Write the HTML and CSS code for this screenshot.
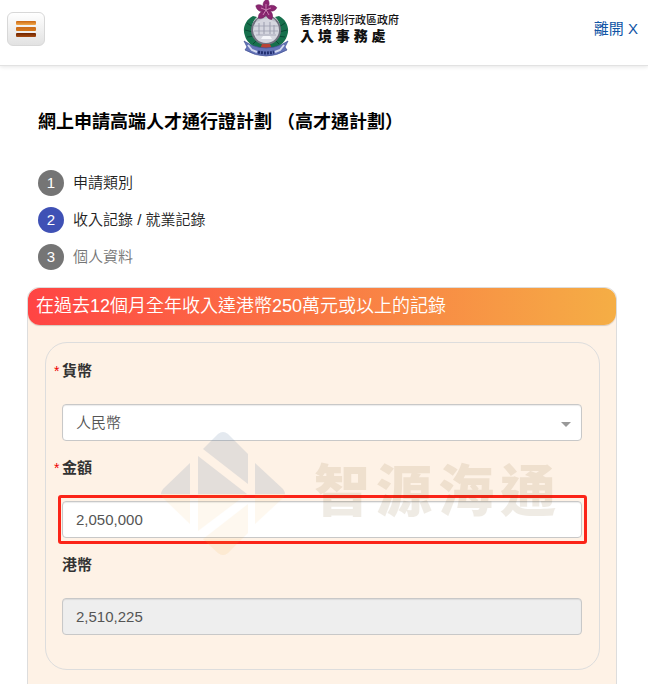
FILE: index.html
```
<!DOCTYPE html>
<html lang="zh-Hant">

<head>
    <meta charset="UTF-8">
    <meta name="viewport" content="width=device-width, initial-scale=1.0">
    <title>網上申請高端人才通行證計劃</title>
    <link rel="stylesheet" href="styles.css">
</head>

<body>
    <header class="header">
        <button type="button" class="menu-btn" aria-label="選單">
            <span class="bar bar-light"></span>
            <span class="bar bar-mid"></span>
            <span class="bar bar-dark"></span>
        </button>
        <div class="brand">
            <svg class="emblem" width="46" height="58" viewBox="0 0 46 58" aria-hidden="true">
                <!-- wreath -->
                <path d="M10 16C2 20 -1 29 2 36C4 43 11 48 19 49L21 43C13 41 9 35 9 28C9 23 11 20 14 17Z" fill="#16704c" />
                <path d="M36 16C44 20 47 29 44 36C42 43 35 48 27 49L25 43C33 41 37 35 37 28C37 23 35 20 32 17Z" fill="#16704c" />
                <path d="M4 23L10 27M2 30L10 32M4 37L12 36M10 44L15 39M42 23L36 27M44 30L36 32M42 37L34 36M36 44L31 39" stroke="#0a4934" stroke-width="1" fill="none" />
                <!-- harbour disc -->
                <circle cx="23" cy="30" r="14" fill="#d5d6df" stroke="#70727f" stroke-width="2" />
                <path d="M11 26H35M11 31H35M13 35H33" stroke="#a9abba" stroke-width="1" fill="none" />
                <path d="M16 23V35M21 22V34M27 22V34M31 25V34" stroke="#9b9dae" stroke-width="1" fill="none" />
                <path d="M18 39H29L27 36H20Z" fill="#f5f6fa" />
                <path d="M14 21Q23 14 32 21" stroke="#bfc1cb" stroke-width="2" fill="none" />
                <!-- bauhinia -->
                <g fill="#8b2670" stroke="#6b1859" stroke-width="0.5">
                    <path id="petal" d="M23 10C18 6 20 1 24 -1C27 1 27 6 23 10Z" />
                    <use href="#petal" transform="rotate(72 23 10)" />
                    <use href="#petal" transform="rotate(144 23 10)" />
                    <use href="#petal" transform="rotate(216 23 10)" />
                    <use href="#petal" transform="rotate(288 23 10)" />
                </g>
                <path d="M23 10V4M23 10L28 8M23 10L26 15M23 10L20 15M23 10L18 8" stroke="#e4a8cf" stroke-width="0.7" />
                <!-- ribbon -->
                <path d="M19 44H27L29 49H17Z" fill="#b84335" />
                <path d="M1 41L8 45Q23 51 38 45L45 41L42 47L44 50Q23 62 2 50L4 47Z" fill="#6575b8" stroke="#404f94" stroke-width="0.7" />
                <path d="M5 45L9 50L14 52M41 45L37 50L32 52" stroke="#d4daf1" stroke-width="2" fill="none" />
                <path d="M15 52Q23 54 31 52" stroke="#222f70" stroke-width="3" stroke-dasharray="2 1" fill="none" />
            </svg>
            <div class="brand-text">
                <div class="brand-gov">香港特別行政區政府</div>
                <div class="brand-dept">入 境 事 務 處</div>
            </div>
        </div>
        <a class="exit" href="#">離開 X</a>
    </header>

    <main class="main">
        <h1 class="title">網上申請高端人才通行證計劃 （高才通計劃）</h1>
        <ol class="steps">
            <li class="step"><span class="step-num">1</span>申請類別</li>
            <li class="step active"><span class="step-num">2</span>收入記錄 / 就業記錄</li>
            <li class="step next"><span class="step-num">3</span>個人資料</li>
        </ol>

        <section class="panel">
            <h2 class="panel-title">在過去12個月全年收入達港幣250萬元或以上的記錄</h2>
            <form class="card">
                <div class="field">
                    <label class="required" for="currency">貨幣</label>
                    <div class="select">
                        <select class="control" id="currency" name="currency">
                            <option>人民幣</option>
                        </select>
                    </div>
                </div>
                <div class="field highlight">
                    <label class="required" for="amount">金額</label>
                    <div class="control-box">
                        <input class="control" type="text" id="amount" name="amount" value="2,050,000">
                    </div>
                </div>
                <div class="field">
                    <label for="hkd">港幣</label>
                    <input class="control" type="text" id="hkd" name="hkd" value="2,510,225" readonly>
                </div>
            </form>

            <div class="watermark" aria-hidden="true">
                <svg width="124" height="124" viewBox="0 0 124 124">
                    <g fill="#456a96">
                        <path d="M42 17L57 2Q62 -2 67 2L87 22V52Z" />
                        <path d="M37 24L86 62H37Z" />
                        <path d="M29 31V62H0Q0 60 2 57Z" />
                        <path d="M94 31L122 57Q124 60 124 62H94Z" />
                    </g>
                    <g fill="#f5ab2d">
                        <path class="pale" d="M0 62H29V92L2 66Q0 64 0 62Z" />
                        <path class="pale" d="M37 62H86L37 99Z" />
                        <path class="pale" d="M94 62H124Q124 64 122 66L94 92Z" />
                        <path class="pale" d="M42 107L87 72V101L67 121Q62 125 57 121Z" />
                        <path class="pale" d="M42 107H80L67 121Q62 125 57 121Z" />
                    </g>
                </svg>
                <div class="watermark-text"><span>智</span><span>源</span><span>海</span><span>通</span></div>
            </div>
        </section>
    </main>
</body>

</html>
```
FILE: styles.css
```
* {
    box-sizing: border-box;
}

body {
    margin: 0;
    font-family: "Liberation Sans", "Noto Sans CJK TC", sans-serif;
    font-size: 15px;
    line-height: 20px;
    color: #222;
    background-color: white;
    overflow-x: hidden;
}

.header {
    display: grid;
    grid-template-columns: 1fr auto 1fr;
    align-items: center;
    height: 66px;
    padding: 0 10px 8px 7px;
    border-bottom: 1px solid #e2e2e2;
    box-shadow: 0 1px 4px rgba(0, 0, 0, 0.1);
}

.menu-btn {
    display: flex;
    flex-direction: column;
    align-items: center;
    justify-content: center;
    gap: 2px;
    width: 38px;
    height: 34px;
    padding: 0;
    border: 1px solid #d8d8d8;
    border-radius: 6px;
    background: linear-gradient(#fff, #e2e2e2);
}

.bar {
    width: 20px;
    height: 4px;
    border-radius: 1px;
}

.bar-light {
    background: linear-gradient(#c96512, #f2a94a);
}

.bar-mid {
    background: linear-gradient(#c96a1a, #d8791c);
}

.bar-dark {
    background: linear-gradient(#6e2400, #a64a10);
}

.brand {
    display: flex;
    align-items: center;
    gap: 11px;
    margin-right: 3px;
}

.brand-text {
    color: #111;
}

.brand-gov {
    font-size: 11px;
    font-weight: 500;
    line-height: 14px;
}

.brand-dept {
    font-size: 14px;
    font-weight: 900;
    line-height: 18px;
}

.exit {
    justify-self: end;
    color: #1155a5;
    text-decoration: none;
}

.main {
    padding: 44px 31px 0 27px;
}

.title {
    margin: 0 11px;
    font-size: 18px;
    line-height: 24px;
    color: #000;
}

.steps {
    display: flex;
    flex-direction: column;
    gap: 11px;
    margin: 36px 11px 17px;
    padding: 0;
    list-style: none;
}

.step {
    display: flex;
    align-items: center;
    gap: 9px;
    font-weight: 350;
}

.step-num {
    width: 26px;
    height: 26px;
    border-radius: 50%;
    background-color: #757575;
    color: white;
    line-height: 26px;
    text-align: center;
}

.active .step-num {
    background-color: #3f51b5;
}

.next {
    color: #757575;
}

.panel {
    position: relative;
    padding-bottom: 40px;
    border: 1px solid #ddd;
    border-radius: 12px;
    background-color: #fef2e6;
}

.panel-title {
    margin: 0;
    padding: 6px 8px;
    border-radius: 12px;
    background: linear-gradient(to right, #ff4444, #f5ae45);
    box-shadow: 0 1px 1px #d5c8bd;
    color: white;
    font-size: 18px;
    font-weight: 350;
    line-height: 25px;
}

.card {
    display: flex;
    flex-direction: column;
    gap: 17px;
    margin: 17px 16px 0 17px;
    padding: 18px 17px 34px 16px;
    border: 1px solid #ddd;
    border-radius: 22px;
}

.field {
    display: flex;
    flex-direction: column;
    gap: 23px;
}

label {
    position: relative;
    font-weight: bold;
    color: #333;
}

.required::before {
    content: "*";
    position: absolute;
    left: -8px;
    color: #e00;
    font-size: 14px;
    font-weight: normal;
}

.control {
    display: block;
    width: 100%;
    height: 37px;
    padding: 0 13px;
    border: 1px solid #c8c8c8;
    border-radius: 4px;
    background-color: white;
    box-shadow: inset 0 1px 1px rgba(0, 0, 0, 0.08);
    color: #555;
    font-family: inherit;
    font-size: 15px;
    font-weight: 350;
    appearance: none;
    outline: none;
}

.control:read-only:not(select) {
    background-color: #eee;
}

.select,
.control-box {
    position: relative;
}

.select::after {
    content: "";
    position: absolute;
    right: 11px;
    top: 18px;
    border: 5px solid transparent;
    border-top-color: #999;
    border-bottom: 0;
}

/* red frame round the amount */
.highlight .control-box::after {
    content: "";
    position: absolute;
    inset: -6px -5px -6px -4px;
    border: 3px solid #fb2418;
    border-radius: 3px;
    pointer-events: none;
}

.watermark {
    position: absolute;
    left: 133px;
    top: 144px;
    display: flex;
    align-items: center;
    gap: 29px;
    pointer-events: none;
}

.watermark svg {
    opacity: 0.14;
}

.pale {
    opacity: 0.5;
}

.watermark-text {
    display: flex;
    gap: 6px;
    padding-bottom: 4px;
    color: #704808;
    font-size: 56px;
    font-weight: 900;
    line-height: 60px;
    opacity: 0.1;
}
```
